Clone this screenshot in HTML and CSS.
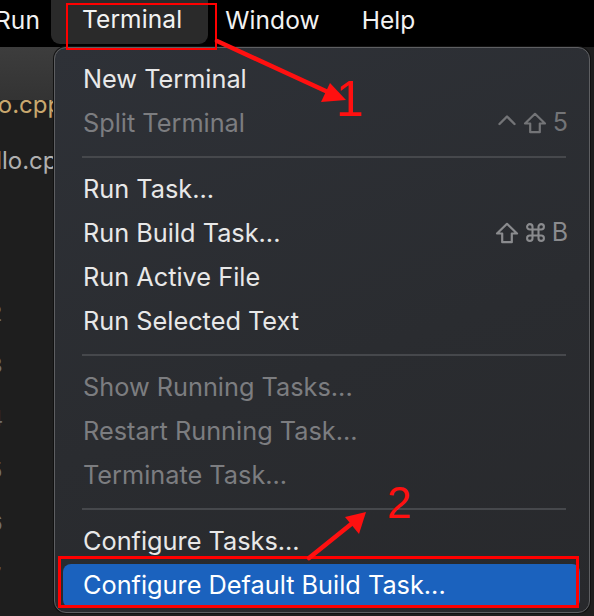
FILE: index.html
```html
<!DOCTYPE html>
<html>
<head>
<meta charset="utf-8">
<link rel="stylesheet" href="styles.css">
</head>
<body>
<div class="screen">
  <header class="menubar">
    <span class="mb-item">Run</span>
    <span class="mb-item active">Terminal</span>
    <span class="mb-item">Window</span>
    <span class="mb-item">Help</span>
  </header>
  <div class="workspace">
    <aside class="sidebar">
      <div class="tabstrip"></div>
      <div class="file modified">hello.cpp</div>
      <div class="file plain">hello.cpp</div>
      <div class="gutter">
        <span>1</span><span>2</span><span>3</span><span>4</span><span>5</span><span>6</span><span>7</span>
      </div>
    </aside>
    <main class="editor"></main>
  </div>

  <nav class="dropdown">
    <div class="item">New Terminal</div>
    <div class="item disabled">Split Terminal<span class="keys dim">
      <svg class="k-ctrl" width="20" height="22" viewBox="0 0 20 22"><polyline points="2.5,12 10,4.5 17.5,12" fill="none" stroke="currentColor" stroke-width="2.4" stroke-linecap="round" stroke-linejoin="round"/></svg>
      <svg class="k-shift" width="24" height="22" viewBox="0 0 24 22"><path d="M12 1.8 L22 11.5 H16.8 V20.2 H7.2 V11.5 H2 Z" fill="none" stroke="currentColor" stroke-width="2.2" stroke-linejoin="round"/></svg>
      <span class="k-char">5</span></span></div>
    <div class="sep"></div>
    <div class="item">Run Task...</div>
    <div class="item">Run Build Task...<span class="keys">
      <svg class="k-shift" width="24" height="22" viewBox="0 0 24 22"><path d="M12 1.8 L22 11.5 H16.8 V20.2 H7.2 V11.5 H2 Z" fill="none" stroke="currentColor" stroke-width="2.2" stroke-linejoin="round"/></svg>
      <svg class="k-cmd" width="21" height="21" viewBox="0 0 21 21"><path d="M7.5 7.5 V4.8 A2.7 2.7 0 1 0 4.8 7.5 H16.2 A2.7 2.7 0 1 0 13.5 4.8 V16.2 A2.7 2.7 0 1 0 16.2 13.5 H4.8 A2.7 2.7 0 1 0 7.5 16.2 Z" fill="none" stroke="currentColor" stroke-width="2.1"/></svg>
      <span class="k-char">B</span></span></div>
    <div class="item">Run Active File</div>
    <div class="item">Run Selected Text</div>
    <div class="sep"></div>
    <div class="item disabled">Show Running Tasks...</div>
    <div class="item disabled">Restart Running Task...</div>
    <div class="item disabled">Terminate Task...</div>
    <div class="sep"></div>
    <div class="item">Configure Tasks...</div>
    <div class="item selected">Configure Default Build Task...</div>
  </nav>

  <div class="mark mark-terminal"></div>
  <div class="mark mark-default"></div>
  <span class="num num-1">1</span>
  <span class="num num-2">2</span>
  <svg class="arrows" width="594" height="616" viewBox="0 0 594 616">
    <line x1="217" y1="41" x2="330" y2="93" stroke="#ff1010" stroke-width="4.5" stroke-linecap="round"/>
    <polygon points="346,100 321,102 330,83" fill="#ff1010"/>
    <line x1="309" y1="558" x2="355" y2="521" stroke="#ff1010" stroke-width="4.5" stroke-linecap="round"/>
    <polygon points="366,512 359,534 345,517" fill="#ff1010"/>
  </svg>
</div>
</body>
</html>
```

FILE: styles.css
```css
* { box-sizing: border-box; }
html, body { margin: 0; padding: 0; }
body {
  width: 594px;
  height: 616px;
  overflow: hidden;
  background: #1e1e1e;
  font-family: Inter, "Liberation Sans", sans-serif;
}
.screen {
  position: relative;
  width: 594px;
  height: 616px;
  overflow: hidden;
  background: #1e1e1e;
}
.menubar {
  display: flex;
  align-items: center;
  height: 55px;
  margin-top: -8px;
  margin-left: -26px;
  background: #000;
  color: #f2f2f2;
  font-size: 24.5px;
}
.mb-item {
  padding: 0 21px;
  line-height: 54px;
  letter-spacing: 0.1px;
}
.mb-item.active {
  background: #2a2a2a;
  border-radius: 0 0 9px 9px;
  padding: 0 26px 0 31px;
  margin: 0 -4px 0 -10px;
  height: 52px;
  align-self: flex-start;
}
.workspace {
  display: flex;
  height: 569px;
}
.sidebar {
  width: 60px;
  display: flex;
  flex-direction: column;
  overflow: hidden;
}
.tabstrip {
  height: 53px;
  background: linear-gradient(180deg, #3d3d3d, #333);
  flex: none;
}
.file {
  font-size: 24px;
  white-space: nowrap;
  line-height: 30px;
}
.file.modified { color: #c9a86e; margin-top: -10px; margin-left: -42px; }
.file.plain { color: #b0b0b0; margin-top: 26px; margin-left: -32px; }
.gutter {
  display: flex;
  flex-direction: column;
  margin-top: 58px;
  margin-left: -11px;
  color: #6f6f6f;
  font-size: 22px;
  line-height: 52.5px;
}
.editor { flex: 1; background: #1e1e1e; }

.dropdown {
  position: absolute;
  left: 54px;
  top: 47px;
  width: 536px;
  height: 566px;
  padding: 10px 0 5px;
  background: linear-gradient(160deg, #2e3137 0%, #2a2c30 55%, #28292c 100%);
  border: 1px solid #5e5f62;
  border-radius: 12px;
  box-shadow: 0 0 0 1px #111;
  display: flex;
  flex-direction: column;
  color: #e8e8e8;
  font-size: 25.3px;
}
.item {
  height: 44px;
  margin: 0 9px 0 8px;
  padding: 0 12px 3px 20px;
  display: flex;
  align-items: center;
  justify-content: space-between;
  white-space: nowrap;
  border-radius: 8px;
  flex: none;
}
.item.disabled { color: #7c7d80; }
.item.selected {
  background: #1b62be;
  color: #fff;
}
.keys {
  display: flex;
  align-items: center;
  gap: 6px;
  color: #8a8b8e;
}
.keys svg { display: block; }
.k-char { font-size: 25px; line-height: 1; }
.keys.dim { color: #737477; }
.sep {
  height: 22px;
  flex: none;
  display: flex;
  align-items: center;
  margin: 0 23px 0 27px;
}
.sep::before {
  content: "";
  display: block;
  width: 100%;
  height: 2px;
  background: #46484c;
}

.mark {
  position: absolute;
  border: 2px solid #ff0000;
}
.mark-terminal {
  left: 66px; top: 3px; width: 151px; height: 47px;
}
.mark-default {
  left: 58px; top: 556px; width: 521px; height: 52px;
  border-width: 3px;
}
.num {
  position: absolute;
  color: #ff1010;
  font-family: "Liberation Sans", sans-serif;
  font-weight: 400;
  line-height: 1;
}
.num-1 { left: 336px; top: 74px; font-size: 50px; }
.num-2 { left: 387px; top: 481px; font-size: 44px; }
.arrows { position: absolute; left: 0; top: 0; pointer-events: none; }
```
